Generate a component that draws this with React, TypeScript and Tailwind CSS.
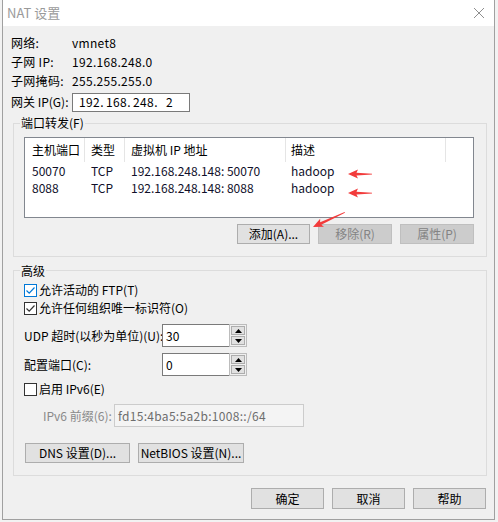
import React from "react";

const rows = [
  { port: "50070", type: "TCP", vm: "192.168.248.148: 50070", desc: "hadoop" },
  { port: "8088", type: "TCP", vm: "192.168.248.148: 8088", desc: "hadoop" },
];

function Btn({ label, w, disabled = false, h = "h-[20px]" }: { label: string; w: string; disabled?: boolean; h?: string }) {
  return (
    <div
      className={`${w} ${h} flex items-center justify-center border text-[12px] leading-none whitespace-nowrap ${
        disabled ? "bg-[#cccccc] border-[#bfbfbf] text-[#838383]" : "bg-[#e1e1e1] border-[#adadad] text-black"
      }`}
    >
      {label}
    </div>
  );
}

function Check({ checked, focused = false, label }: { checked: boolean; focused?: boolean; label: string }) {
  const c = focused ? "#0078d7" : "#333333";
  return (
    <div className="h-[18px] flex items-center">
      <div
        className={`w-[13px] h-[13px] bg-white border flex items-center justify-center ${
          focused ? "border-[#0078d7]" : "border-[#333333]"
        }`}
      >
        {checked && (
          <svg width="11" height="11" viewBox="0 0 11 11">
            <polyline points="1.5,5.5 4.2,8.2 9.5,2.5" fill="none" stroke={c} strokeWidth="1.2" />
          </svg>
        )}
      </div>
      <span className="ml-[2px] text-[12px] whitespace-nowrap">{label}</span>
    </div>
  );
}

function Spin({ value }: { value: string }) {
  return (
    <div className="flex h-[23px]">
      <div className="w-[67px] h-full bg-white border-t border-l border-b border-[#7a7a7a] flex items-center pl-[3px] text-[12px]">
        {value}
      </div>
      <div className="w-[18px] h-full border border-[#bcbcbc] flex flex-col gap-[1px] p-[1px]">
        <div className="flex-1 bg-[#e1e1e1] border border-[#adadad] flex items-center justify-center">
          <svg width="7" height="4" viewBox="0 0 7 4">
            <polygon points="0,4 7,4 3.5,0" fill="#000" />
          </svg>
        </div>
        <div className="flex-1 bg-[#e1e1e1] border border-[#adadad] flex items-center justify-center">
          <svg width="7" height="4" viewBox="0 0 7 4">
            <polygon points="0,0 7,0 3.5,4" fill="#000" />
          </svg>
        </div>
      </div>
    </div>
  );
}

// red annotation arrow pointing along -x from its origin
function Arrow({ x, y, angle = 0, len = 24 }: { x: number; y: number; angle?: number; len?: number }) {
  return (
    <g transform={`translate(${x} ${y}) rotate(${angle})`}>
      <path d={`M0,0 L10,-4.5 L8.5,-1.3 L${len},-0.2 L${len},0.6 L8.5,1.4 L10,4.5 Z`} fill="#f23b3b" />
    </g>
  );
}

export default function App() {
  return (
    <div className="relative w-[498px] h-[522px] bg-[#f2f2f2] overflow-hidden font-['Noto_Sans_CJK_SC',sans-serif] text-black">
      <div className="ml-[2px] w-[493px] h-[520px] bg-[#f0f0f0] border-l border-r border-b border-[#a0a0a0] flex flex-col">
        {/* title bar */}
        <div className="h-[26px] bg-white flex items-center justify-between pl-[4px] pr-[8px]">
          <span className="text-[13px] text-[#9a9a9a] -mt-[1px]">NAT 设置</span>
          <svg width="12" height="12" viewBox="0 0 12 12" className="mr-[1px]">
            <path d="M1 1 L11 11 M11 1 L1 11" stroke="#8f8f8f" strokeWidth="1" />
          </svg>
        </div>

        {/* network info */}
        <div className="pl-[8px] pt-[7px] text-[12px] tracking-[0.3px]">
          <div className="flex h-[19px] items-center">
            <span className="w-[61px]">网络:</span>
            <span>vmnet8</span>
          </div>
          <div className="flex h-[19px] items-center">
            <span className="w-[61px]">子网 IP:</span>
            <span>192.168.248.0</span>
          </div>
          <div className="flex h-[19px] items-center">
            <span className="w-[61px]">子网掩码:</span>
            <span>255.255.255.0</span>
          </div>
          <div className="flex h-[20px] items-center mt-[2px]">
            <span className="w-[61px] whitespace-nowrap tracking-normal">网关 IP(G):</span>
            <div className="w-[118px] h-[19px] bg-white border border-[#7a7a7a] flex items-center pl-[6px]">
              <span className="w-[19px] shrink-0 text-center">192</span>
              <span className="w-[8px] shrink-0 text-center">.</span>
              <span className="w-[19px] shrink-0 text-center">168</span>
              <span className="w-[8px] shrink-0 text-center">.</span>
              <span className="w-[19px] shrink-0 text-center">248</span>
              <span className="w-[8px] shrink-0 text-center">.</span>
              <span className="w-[19px] shrink-0 text-center">2</span>
            </div>
          </div>
        </div>

        {/* port forwarding group */}
        <div className="relative ml-[10px] mt-[11px] w-[474px] h-[134px] border border-[#dcdcdc] flex flex-col">
          <span className="absolute left-[6px] -top-[10px] px-[1px] bg-[#f0f0f0] text-[12px] leading-[18px]">端口转发(F)</span>
          <div className="ml-[10px] mt-[13px] w-[450px] h-[81px] bg-white border border-[#82878f] text-[12px] whitespace-nowrap">
            <div className="flex h-[24px] items-center">
              <div className="w-[60px] h-full pl-[7px] flex items-center border-r border-[#e5e5e5]">主机端口</div>
              <div className="w-[40px] h-full pl-[6px] flex items-center border-r border-[#e5e5e5]">类型</div>
              <div className="w-[161px] h-full pl-[6px] flex items-center border-r border-[#e5e5e5]">虚拟机 IP 地址</div>
              <div className="w-[160px] h-full pl-[5px] flex items-center border-r border-[#e5e5e5]">描述</div>
            </div>
            {rows.map((r) => (
              <div key={r.port} className="flex h-[17px] items-center text-[#10102a]">
                <div className="w-[60px] pl-[7px]">{r.port}</div>
                <div className="w-[40px] pl-[6px]">{r.type}</div>
                <div className="w-[161px] pl-[6px]">{r.vm}</div>
                <div className="w-[160px] pl-[5px]">{r.desc}</div>
              </div>
            ))}
          </div>
          <div className="mt-[6px] flex gap-[8px] justify-end pr-[12px]">
            <Btn label="添加(A)..." w="w-[73px]" />
            <Btn label="移除(R)" w="w-[74px]" disabled />
            <Btn label="属性(P)" w="w-[74px]" disabled />
          </div>
        </div>

        {/* advanced group */}
        <div className="relative ml-[10px] mt-[13px] w-[474px] h-[206px] border border-[#dcdcdc] pl-[10px] flex flex-col text-[12px]">
          <span className="absolute left-[6px] -top-[9px] px-[1px] bg-[#f0f0f0] leading-[18px]">高级</span>
          <div className="mt-[10px]">
            <Check checked focused label="允许活动的 FTP(T)" />
          </div>
          <Check checked label="允许任何组织唯一标识符(O)" />
          <div className="mt-[7px] flex items-center">
            <span className="w-[138px] whitespace-nowrap">UDP 超时(以秒为单位)(U):</span>
            <Spin value="30" />
          </div>
          <div className="mt-[6px] flex items-center">
            <span className="w-[138px] whitespace-nowrap">配置端口(C):</span>
            <Spin value="0" />
          </div>
          <div className="mt-[4px]">
            <Check checked={false} label="启用 IPv6(E)" />
          </div>
          <div className="mt-[6px] flex items-center pl-[19px]">
            <span className="w-[71px] whitespace-nowrap text-[#8a8a8a]">IPv6 前缀(6):</span>
            <div className="w-[190px] h-[23px] border border-[#cccccc] bg-[#f4f4f4] flex items-center pl-[3px] text-[#6d6d6d] tracking-[0.3px]">
              fd15:4ba5:5a2b:1008::/64
            </div>
          </div>
          <div className="mt-[16px] flex gap-[8px] ml-[1px]">
            <Btn label="DNS 设置(D)..." w="w-[105px]" />
            <Btn label="NetBIOS 设置(N)..." w="w-[106px]" />
          </div>
        </div>

        {/* dialog buttons */}
        <div className="mt-[12px] flex gap-[8px] justify-end pr-[8px]">
          <Btn label="确定" w="w-[73px]" h="h-[21px]" />
          <Btn label="取消" w="w-[73px]" h="h-[21px]" />
          <Btn label="帮助" w="w-[73px]" h="h-[21px]" />
        </div>
      </div>

      {/* annotation arrows */}
      <svg className="absolute top-0 left-0 pointer-events-none" width="498" height="522" viewBox="0 0 498 522">
        <Arrow x={348} y={174} />
        <Arrow x={348} y={193} />
        <Arrow x={313} y={227} angle={-25} len={35} />
      </svg>
    </div>
  );
}
